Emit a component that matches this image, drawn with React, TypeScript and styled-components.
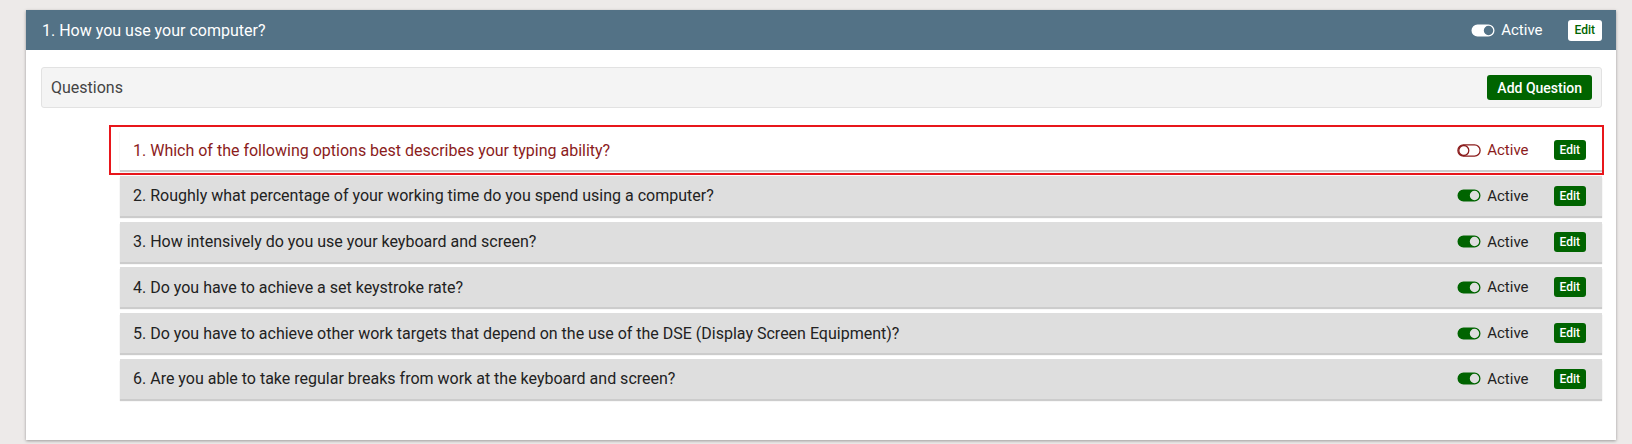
import React from 'react';
import styled, {createGlobalStyle} from 'styled-components';

const GlobalStyle = createGlobalStyle`
  html, body {
    margin: 0;
    background: #edeae9;
    font-family: Roboto, "Liberation Sans", Arial, sans-serif;
  }
  body {
    padding: 10px 16px 6px 26px;
  }
`;

type Question = {id: number; text: string; active: boolean};

const questions: Question[] = [
  {id: 1, text: 'Which of the following options best describes your typing ability?', active: false},
  {id: 2, text: 'Roughly what percentage of your working time do you spend using a computer?', active: true},
  {id: 3, text: 'How intensively do you use your keyboard and screen?', active: true},
  {id: 4, text: 'Do you have to achieve a set keystroke rate?', active: true},
  {
    id: 5,
    text: 'Do you have to achieve other work targets that depend on the use of the DSE (Display Screen Equipment)?',
    active: true,
  },
  {id: 6, text: 'Are you able to take regular breaks from work at the keyboard and screen?', active: true},
];

const ToggleOn: React.FC<{color: string}> = ({color}) => (
  <svg width="24" height="13" viewBox="0 0 24 13">
    <path
      fillRule="evenodd"
      fill={color}
      d="M6.5 0.5h11a6 6 0 0 1 0 12h-11a6 6 0 0 1 0-12z M17.5 1.8a4.7 4.7 0 1 0 0 9.4a4.7 4.7 0 1 0 0-9.4z"
    />
  </svg>
);

const ToggleOff: React.FC<{color: string}> = ({color}) => (
  <svg width="24" height="13" viewBox="0 0 24 13">
    <path fill="none" stroke={color} strokeWidth="1.3" d="M6.5 0.9h11a5.6 5.6 0 0 1 0 11.2h-11a5.6 5.6 0 0 1 0-11.2z" />
    <circle cx="6.8" cy="6.5" r="5" fill="none" stroke={color} strokeWidth="1.3" />
  </svg>
);

const App: React.FC = () => {
  return (
    <>
      <GlobalStyle />
      <Panel>
        <PanelHeader>
          <Title>1. How you use your computer?</Title>
          <Status $light>
            <ToggleOn color="#ffffff" /> Active
          </Status>
          <EditButton $light>Edit</EditButton>
        </PanelHeader>
        <PanelBody>
          <QuestionsBar>
            <span>Questions</span>
            <AddButton>Add Question</AddButton>
          </QuestionsBar>
          <List>
            {questions.map((q) => (
              <Row key={q.id} $inactive={!q.active} $highlight={q.id === 1}>
                <RowText>
                  {q.id}. {q.text}
                </RowText>
                <Status $inactive={!q.active}>
                  {q.active ? <ToggleOn color="#006400" /> : <ToggleOff color="#8b1c1c" />} Active
                </Status>
                <EditButton>Edit</EditButton>
              </Row>
            ))}
          </List>
        </PanelBody>
      </Panel>
    </>
  );
};
export default App;

const Panel = styled.div`
  background: #fff;
  box-shadow: 0 1px 3px rgba(0, 0, 0, 0.35);
`;

const PanelHeader = styled.div`
  height: 40px;
  display: flex;
  align-items: center;
  padding: 0 14px 0 16px;
  background: #537286;
  color: #fff;
`;

const Title = styled.div`
  flex: 1;
  font-size: 16px;
`;

const Status = styled.div<{$light?: boolean; $inactive?: boolean}>`
  display: flex;
  align-items: center;
  gap: 6px;
  font-size: 15px;
  color: ${(p) => (p.$light ? '#fff' : p.$inactive ? '#8b1c1c' : '#222')};
  margin-right: 25px;

  svg {
    display: block;
  }
`;

const EditButton = styled.button<{$light?: boolean}>`
  font-family: inherit;
  font-size: 12px;
  font-weight: 500;
  height: ${(p) => (p.$light ? '21px' : '20px')};
  padding: 0 ${(p) => (p.$light ? '7px' : '6px')};
  border: none;
  border-radius: 3px;
  background: ${(p) => (p.$light ? '#fff' : '#006400')};
  color: ${(p) => (p.$light ? '#006400' : '#fff')};
`;

const PanelBody = styled.div`
  padding: 17px 14px 41px 15px;
`;

const QuestionsBar = styled.div`
  height: 39px;
  display: flex;
  align-items: center;
  justify-content: space-between;
  padding: 0 9px 0 9px;
  background: #f4f4f4;
  border: 1px solid #e2e2e2;
  border-radius: 3px;
  font-size: 16px;
  color: #444;
`;

const AddButton = styled.button`
  font-family: inherit;
  font-size: 14px;
  font-weight: 500;
  height: 25px;
  padding: 0 10px;
  border: none;
  border-radius: 3px;
  background: #006400;
  color: #fff;
`;

const List = styled.div`
  margin-top: 22px;
  padding-left: 79px;
  display: flex;
  flex-direction: column;
  gap: 5.8px;
`;

const Row = styled.div<{$inactive?: boolean; $highlight?: boolean}>`
  position: relative;
  height: 40px;
  display: flex;
  align-items: center;
  padding: 0 16px 0 13px;
  background: ${(p) => (p.$inactive ? '#fff' : '#dedede')};
  box-shadow: 0 2px 1px rgba(0, 0, 0, 0.2);
  color: ${(p) => (p.$inactive ? '#8b1c1c' : '#222')};

  &::after {
    content: '';
    display: ${(p) => (p.$highlight ? 'block' : 'none')};
    position: absolute;
    left: -11px;
    right: -2px;
    top: -5px;
    bottom: -5px;
    border: 2px solid #e8161b;
    pointer-events: none;
  }
`;

const RowText = styled.div`
  flex: 1;
  font-size: 16px;
`;
